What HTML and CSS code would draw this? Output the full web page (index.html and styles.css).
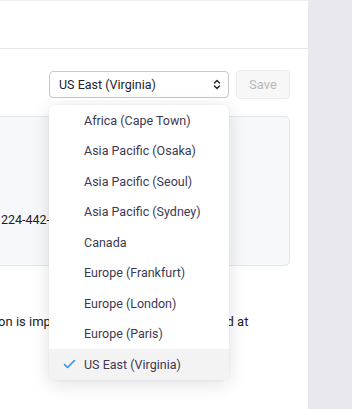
FILE: index.html
```html
<!DOCTYPE html>
<html lang="en">
<head>
  <meta charset="UTF-8" />
  <meta name="viewport" content="width=device-width, initial-scale=1.0"/>
  <title>Data Region</title>
  <link rel="stylesheet" href="styles.css">
</head>
<body>

  <div class="layout">
    <div class="main">
      <div class="top-bar"></div>

      <div class="content">
        <div class="toolbar">
          <div class="region-picker">
            <div class="select">
              <span>US East (Virginia)</span>
              <svg class="chevron" width="8" height="11" viewBox="0 0 8 11" fill="none" stroke="#222" stroke-width="1.4" stroke-linecap="round" stroke-linejoin="round">
                <path d="M1.5 4 L4 1.5 L6.5 4" />
                <path d="M1.5 7 L4 9.5 L6.5 7" />
              </svg>
            </div>

            <ul class="menu">
              <li class="menu-item"><span class="check"></span>Africa (Cape Town)</li>
              <li class="menu-item"><span class="check"></span>Asia Pacific (Osaka)</li>
              <li class="menu-item"><span class="check"></span>Asia Pacific (Seoul)</li>
              <li class="menu-item"><span class="check"></span>Asia Pacific (Sydney)</li>
              <li class="menu-item"><span class="check"></span>Canada</li>
              <li class="menu-item"><span class="check"></span>Europe (Frankfurt)</li>
              <li class="menu-item"><span class="check"></span>Europe (London)</li>
              <li class="menu-item"><span class="check"></span>Europe (Paris)</li>
              <li class="menu-item selected">
                <span class="check">
                  <svg width="13" height="10" viewBox="0 0 13 10" fill="none" stroke="#3b8ef0" stroke-width="1.6" stroke-linecap="round" stroke-linejoin="round">
                    <path d="M1.5 5.5 L4.5 8.5 L11.5 1.5" />
                  </svg>
                </span>US East (Virginia)
              </li>
            </ul>
          </div>
          <button class="save-btn" disabled>Save</button>
        </div>

        <div class="info-panel">
          <p class="phone">224-442-0198</p>
        </div>

        <p class="note">Region selection is important as all of its data is stored at<br>our servers.</p>
      </div>
    </div>

    <div class="side"></div>
  </div>

</body>
</html>
```

FILE: styles.css
```css
body {
  margin: 0;
  font-family: Roboto, "Liberation Sans", Arial, sans-serif;
  background: #fff;
  overflow: hidden;
}
.layout {
  display: flex;
  height: 409px;
}
.main {
  width: 308px;
  background: #fff;
  overflow: hidden;
}
.side {
  flex: 1;
  background: #e9e8ef;
}
.top-bar {
  height: 47px;
  border-top: 1px solid #eeeef2;
  border-bottom: 1px solid #e6e6ea;
}
.content {
  padding: 21px 18px 0 0;
}
.toolbar {
  display: flex;
  justify-content: flex-end;
  align-items: center;
  gap: 7px;
}
.region-picker {
  position: relative;
  width: 180px;
}
.select {
  height: 25px;
  border: 1px solid #c8c8cc;
  border-radius: 4px;
  display: flex;
  align-items: center;
  justify-content: space-between;
  padding: 0 7px 0 9px;
  font-size: 12.5px;
  color: #1d1d2b;
}
.chevron {
  display: block;
}
.save-btn {
  width: 54px;
  height: 29px;
  background: #f7f7f7;
  border: 1px solid #ececec;
  border-radius: 4px;
  color: #b9b9b9;
  font-family: inherit;
  font-size: 13px;
  padding: 0;
}
.menu {
  position: absolute;
  top: 34px;
  left: 0;
  width: 180px;
  margin: 0;
  padding: 0;
  list-style: none;
  background: #fff;
  border-radius: 6px;
  box-shadow: 0 4px 18px rgba(20, 20, 40, 0.13), 0 0 2px rgba(20, 20, 40, 0.08);
  overflow: hidden;
  z-index: 5;
}
.menu-item {
  height: 30.5px;
  display: flex;
  align-items: center;
  padding-left: 14px;
  font-size: 12.5px;
  color: #3b3a52;
}
.menu-item.selected {
  background: #f3f3f4;
}
.check {
  width: 13px;
  margin-right: 8px;
  display: flex;
  align-items: center;
}
.info-panel {
  margin: 17px 0 0 -60px;
  height: 148px;
  background: #f6f8fb;
  border: 1px solid #e2e6ec;
  border-radius: 5px;
  padding: 0 0 0 60px;
}
.phone {
  margin: 95px 0 0;
  font-size: 12.5px;
  color: #222;
}
.note {
  margin: 47px 0 0 -83px;
  font-size: 13px;
  line-height: 18px;
  color: #222;
  white-space: nowrap;
}
```
